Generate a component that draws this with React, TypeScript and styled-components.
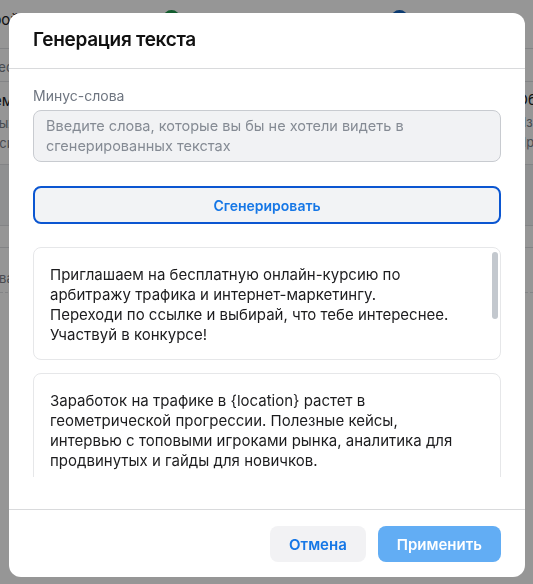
import React from 'react';
import styled, { createGlobalStyle } from 'styled-components';

const GlobalStyle = createGlobalStyle`
  html, body {
    margin: 0;
    padding: 0;
    background: #ffffff;
  }

  body {
    font-family: Inter, 'Noto Sans', 'Liberation Sans', sans-serif;
    color: #1c1c1e;
    -webkit-font-smoothing: antialiased;
  }

  * {
    box-sizing: border-box;
  }
`;

const Page = styled.div`
  height: 100vh;
  overflow: hidden;
  display: flex;
  flex-direction: column;
`;

const PageRow = styled.div<{ $h: number; $shade?: boolean; $dashed?: boolean }>`
  height: ${({ $h }) => $h}px;
  flex-shrink: 0;
  display: flex;
  justify-content: space-between;
  align-items: flex-start;
  background: ${({ $shade }) => ($shade ? '#f4f5f7' : 'transparent')};
  border-bottom: 1px ${({ $dashed }) => ($dashed ? 'dashed' : 'solid')} #dfe1e4;
`;

const Side = styled.div<{ $align: 'left' | 'right'; $top: number }>`
  display: flex;
  flex-direction: column;
  gap: 4px;
  padding-top: ${({ $top }) => $top}px;
  margin-left: ${({ $align }) => ($align === 'left' ? '-26px' : '0')};
  margin-right: ${({ $align }) => ($align === 'right' ? '-30px' : '0')};
`;

const PageText = styled.span<{ $muted?: boolean }>`
  font-size: ${({ $muted }) => ($muted ? '13px' : '15px')};
  line-height: ${({ $muted }) => ($muted ? '16px' : '20px')};
  color: ${({ $muted }) => ($muted ? '#7b818a' : '#1c1c1e')};
  white-space: nowrap;
`;

const Dots = styled.div`
  display: flex;
  gap: 211px;
  padding-top: 10px;
  margin-right: 12px;
`;

const Dot = styled.span<{ $color: string }>`
  width: 17px;
  height: 17px;
  border-radius: 50%;
  background: ${({ $color }) => $color};
`;

const Overlay = styled.div`
  position: fixed;
  inset: 0;
  background: rgba(0, 0, 0, 0.41);
  display: flex;
  align-items: flex-start;
  padding: 13px 0 0 9px;
`;

const Modal = styled.div`
  width: 516px;
  height: 564px;
  background: #ffffff;
  border-radius: 12px;
  display: flex;
  flex-direction: column;
  overflow: hidden;
`;

const Header = styled.div`
  padding: 15px 24px 16px;
  border-bottom: 1px solid #d9dadc;
`;

const Title = styled.h2`
  margin: 0;
  font-size: 19px;
  line-height: 24px;
  font-weight: 600;
  color: #111111;
  letter-spacing: -0.3px;
`;

const Body = styled.div`
  flex: 1;
  min-height: 0;
  display: flex;
  flex-direction: column;
  padding: 17px 24px 32px;
`;

const Label = styled.label`
  font-size: 14px;
  line-height: 20px;
  color: #6f7681;
  margin-bottom: 4px;
`;

const MinusInput = styled.textarea`
  height: 52px;
  resize: none;
  padding: 5px 12px;
  border: 1px solid #c8cbd0;
  border-radius: 8px;
  background: #f1f2f4;
  font-family: inherit;
  font-size: 14.5px;
  line-height: 20px;
  color: #1c1c1e;
  outline: none;

  &::placeholder {
    color: #858b94;
  }
`;

const GenerateButton = styled.button`
  margin-top: 24px;
  height: 38px;
  border: 2px solid #0b56d1;
  border-radius: 8px;
  background: #f2f3f5;
  font-family: inherit;
  font-size: 14px;
  font-weight: 600;
  color: #1677e6;
  cursor: pointer;
`;

const CardList = styled.div`
  margin-top: 23px;
  flex: 1;
  min-height: 0;
  overflow: hidden;
  display: flex;
  flex-direction: column;
  gap: 13px;
`;

const Card = styled.div<{ $fixed?: boolean }>`
  position: relative;
  flex-shrink: 0;
  height: ${({ $fixed }) => ($fixed ? '113px' : 'auto')};
  overflow: hidden;
  border: 1px solid #e6e7e9;
  border-radius: 8px;
  background: #ffffff;
`;

const ScrollThumb = styled.span`
  position: absolute;
  top: 4px;
  right: 2px;
  width: 6px;
  height: 67px;
  border-radius: 3px;
  background: #c3c8ce;
`;

const CardText = styled.p`
  margin: 0;
  padding: 17px 16px;
  font-size: 15px;
  line-height: 20px;
  color: #1c1c1e;
  white-space: pre-line;
`;

const Footer = styled.div`
  display: flex;
  justify-content: flex-end;
  gap: 12px;
  padding: 16px 24px 15px;
  border-top: 1px solid #d9dadc;
`;

const FooterButton = styled.button<{ $primary?: boolean }>`
  height: 36px;
  padding: 0 19px;
  border: none;
  border-radius: 8px;
  font-family: inherit;
  font-size: 15px;
  font-weight: 600;
  background: ${({ $primary }) => ($primary ? '#62adf4' : '#f2f2f4')};
  color: ${({ $primary }) => ($primary ? '#ffffff' : '#1677e6')};
  cursor: pointer;
`;

const texts = [
  'Приглашаем на бесплатную онлайн-курсию по\nарбитражу трафика и интернет-маркетингу.\nПереходи по ссылке и выбирай, что тебе интереснее.\nУчаствуй в конкурсе!',
  'Заработок на трафике в {location} растет в\nгеометрической прогрессии. Полезные кейсы,\nинтервью с топовыми игроками рынка, аналитика для\nпродвинутых и гайды для новичков.',
];

const Backdrop = () => (
  <Page>
    <PageRow $h={49}>
      <Side $align="left" $top={10}>
        <PageText>Строй</PageText>
      </Side>
      <Dots>
        <Dot $color="#1f9d4f" />
        <Dot $color="#1565c0" />
      </Dots>
      <Side $align="right" $top={10}>
        <PageText> </PageText>
      </Side>
    </PageRow>
    <PageRow $h={33}>
      <Side $align="left" $top={10}>
        <PageText $muted>Видео</PageText>
      </Side>
    </PageRow>
    <PageRow $h={83}>
      <Side $align="left" $top={9}>
        <PageText>Время</PageText>
        <PageText $muted>Новых,</PageText>
        <PageText $muted>Описи</PageText>
      </Side>
      <Side $align="right" $top={8}>
        <PageText>Обзор</PageText>
        <PageText $muted>Из</PageText>
        <PageText $muted>Просто</PageText>
      </Side>
    </PageRow>
    <PageRow $h={61} $shade />
    <PageRow $h={22} />
    <PageRow $h={45} $dashed>
      <Side $align="left" $top={22}>
        <PageText $muted>Права</PageText>
      </Side>
    </PageRow>
  </Page>
);

export default function App() {
  return (
    <>
      <GlobalStyle />
      <Backdrop />
      <Overlay>
        <Modal>
          <Header>
            <Title>Генерация текста</Title>
          </Header>
          <Body>
            <Label>Минус-слова</Label>
            <MinusInput placeholder="Введите слова, которые вы бы не хотели видеть в сгенерированных текстах" />
            <GenerateButton>Сгенерировать</GenerateButton>
            <CardList>
              <Card $fixed>
                <CardText>{texts[0]}</CardText>
                <ScrollThumb />
              </Card>
              <Card>
                <CardText>{texts[1]}</CardText>
              </Card>
            </CardList>
          </Body>
          <Footer>
            <FooterButton>Отмена</FooterButton>
            <FooterButton $primary>Применить</FooterButton>
          </Footer>
        </Modal>
      </Overlay>
    </>
  );
}
